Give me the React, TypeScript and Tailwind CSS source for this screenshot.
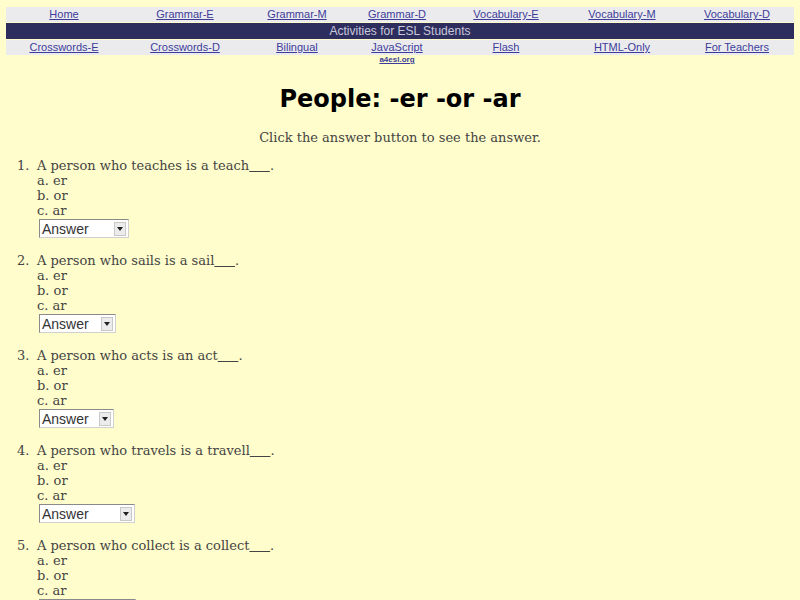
const topLinks = ["Home", "Grammar-E", "Grammar-M", "Grammar-D", "Vocabulary-E", "Vocabulary-M", "Vocabulary-D"];
const bottomLinks = ["Crosswords-E", "Crosswords-D", "Bilingual", "JavaScript", "Flash", "HTML-Only", "For Teachers"];

const questions = [
  { q: "A person who teaches is a teach", w: "w-[90px]" },
  { q: "A person who sails is a sail", w: "w-[77px]" },
  { q: "A person who acts is an act", w: "w-[75px]" },
  { q: "A person who travels is a travell", w: "w-[96px]" },
  { q: "A person who collect is a collect", w: "w-[97px]" },
];

function FakeSelect({ w }: { w: string }) {
  return (
    <div className={`${w} flex h-[19px] items-center border border-[#8a8a8a] border-r-[#d0d0d0] border-b-[#d0d0d0] bg-white pl-[2px] pr-[2px]`}>
      <span className="flex-1 font-['Liberation_Sans',Arial,sans-serif] text-[14px] leading-none text-[#333]">Answer</span>
      <span className="flex h-[14px] w-[12px] items-center justify-center border border-[#c8c8c8] bg-[#ececec]">
        <svg width="6" height="4" viewBox="0 0 6 4">
          <path d="M0 0h6L3 4z" fill="#222" />
        </svg>
      </span>
    </div>
  );
}

function NavRow({ links }: { links: string[] }) {
  return (
    <div className="grid grid-cols-[116px_126px_98px_102px_116px_116px_1fr] bg-[#ebebee]">
      {links.map((l) => (
        <a key={l} href="#" className="py-[1px] text-center text-[11px] leading-[13px] text-[#3d3d99] underline">
          {l}
        </a>
      ))}
    </div>
  );
}

export default function App() {
  return (
    <div className="h-[600px] overflow-hidden bg-[#fffdcb] px-[6px] pt-[7px] font-['DejaVu_Serif',serif] text-[#444]">
      <div className="font-['Liberation_Sans',Arial,sans-serif]">
        <NavRow links={topLinks} />
        <div className="mt-px bg-[#2e2e5e] text-center text-[12px] leading-[16px] text-[#c8c8dc]">
          Activities for ESL Students
        </div>
        <div className="mt-px">
          <NavRow links={bottomLinks} />
        </div>
        <div className="grid grid-cols-[116px_126px_98px_102px_116px_116px_1fr]">
          <span />
          <span />
          <span />
          <a href="#" className="text-center text-[8px] font-bold leading-[9px] text-[#3d3d99] underline">
            a4esl.org
          </a>
        </div>
      </div>

      <h1 className="mt-[20px] text-center font-['DejaVu_Sans',sans-serif] text-[24px] font-bold leading-[30px] text-black">
        People: -er -or -ar
      </h1>
      <p className="mt-[16px] text-center text-[13px] leading-[15px]">
        Click the answer button to see the answer.
      </p>

      <div className="mt-[13px] flex flex-col gap-[15px] text-[13px] leading-[15px]">
        {questions.map((item, i) => (
          <div key={i} className="grid grid-cols-[31px_1fr]">
            <span className="pl-[11px]">{i + 1}.</span>
            <div className="flex flex-col">
              <span>
                {item.q}
                <span className="underline">&nbsp;&nbsp;&nbsp;&nbsp;&nbsp;</span>.
              </span>
              <span>a. er</span>
              <span>b. or</span>
              <span>c. ar</span>
              <div className="ml-[2px] mt-[1px]">
                <FakeSelect w={item.w} />
              </div>
            </div>
          </div>
        ))}
      </div>
    </div>
  );
}
